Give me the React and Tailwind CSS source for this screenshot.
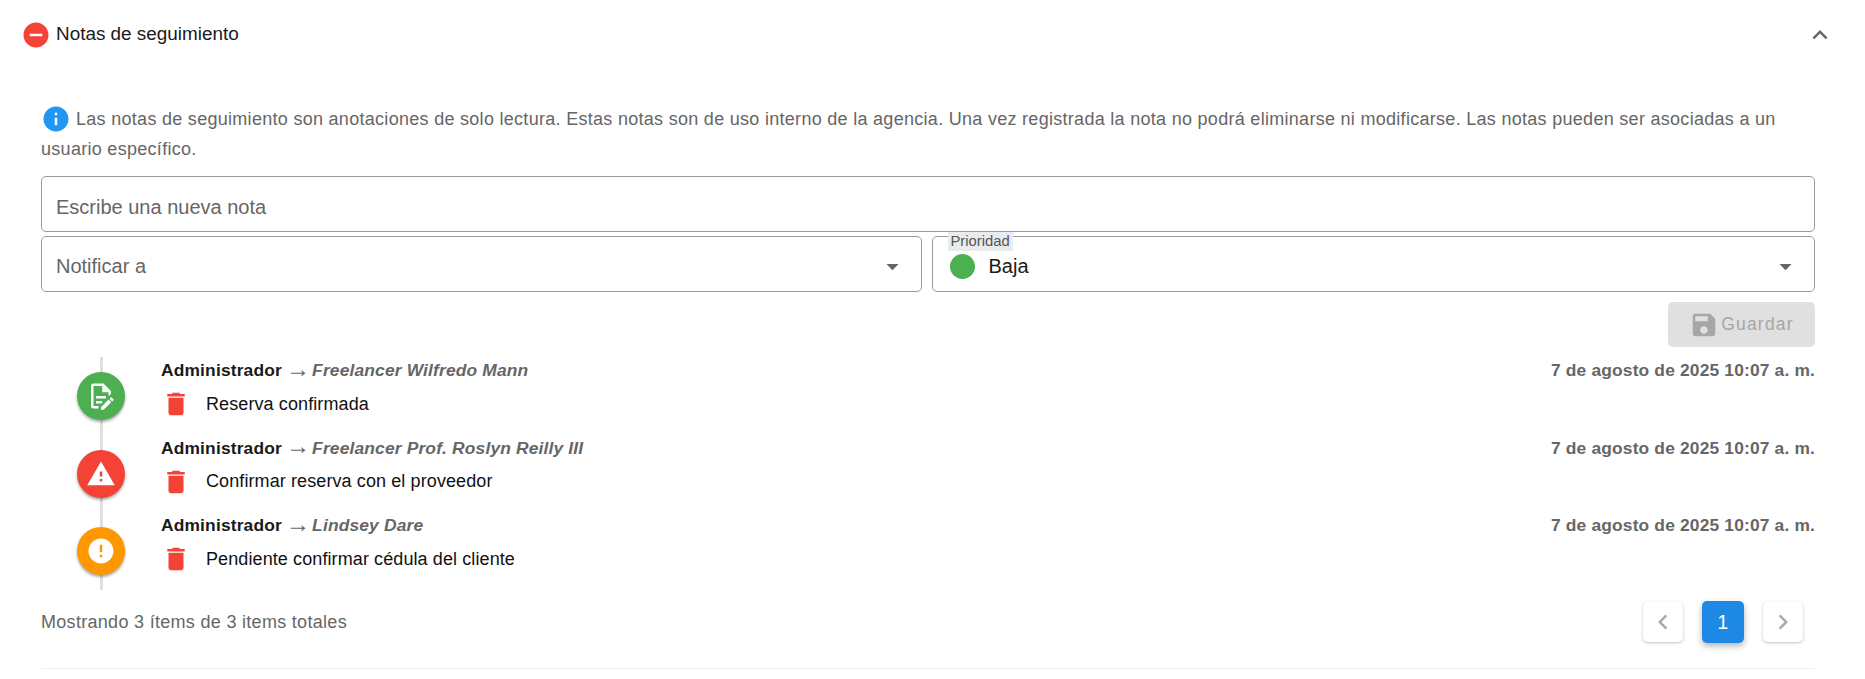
import { useState } from "react"

const notes = [
  { to: "Freelancer Wilfredo Mann", text: "Reserva confirmada", color: "bg-[#4caf50]", kind: "file" },
  { to: "Freelancer Prof. Roslyn Reilly III", text: "Confirmar reserva con el proveedor", color: "bg-[#f44336]", kind: "warn" },
  { to: "Lindsey Dare", text: "Pendiente confirmar cédula del cliente", color: "bg-[#ff9800]", kind: "error" },
]

const paths = {
  file: "M8,12H16V14H8V12M10,20H6V4H13V9H18V12.1L20,10.1V8L14,2H6A2,2 0 0,0 4,4V20A2,2 0 0,0 6,22H10V20M8,18H12.1L13,17.1V16H8V18M20.2,13C20.3,13 20.5,13.1 20.6,13.2L21.9,14.5C22.1,14.7 22.1,15.1 21.9,15.3L20.9,16.3L18.8,14.2L19.8,13.2C19.9,13.1 20,13 20.2,13M20.2,16.9L14.1,23H12V20.9L18.1,14.8L20.2,16.9Z",
  warn: "M1 21h22L12 2 1 21zm12-3h-2v-2h2v2zm0-4h-2v-4h2v4z",
  error: "M12 2C6.48 2 2 6.48 2 12s4.48 10 10 10 10-4.48 10-10S17.52 2 12 2zm1 15h-2v-2h2v2zm0-4h-2V7h2v6z",
}

function Icon({ d, className }) {
  return (
    <svg viewBox="0 0 24 24" fill="currentColor" className={className}>
      <path d={d} />
    </svg>
  )
}

function Caret() {
  return <Icon d="M7 10l5 5 5-5z" className="w-[29px] h-[29px] text-[#666]" />
}

function Note({ note }) {
  return (
    <div className="flex h-[77.5px] relative">
      <div className="w-[120px] shrink-0 flex justify-center pt-[15px] relative">
        <div className={`w-12 h-12 rounded-full flex items-center justify-center text-white shadow-[0_2px_3px_rgba(0,0,0,0.35)] ${note.color}`}>
          <Icon d={paths[note.kind]} className="w-[30px] h-[30px]" />
        </div>
      </div>
      <div className="flex-1 min-w-0">
        <div className="flex justify-between h-[27px] items-center text-[17.4px] tracking-[0.16px]">
          <div className="flex items-center">
            <span className="font-bold text-[#1a1a1a]">Administrador</span>
            <span className="text-[#666] text-[24px] leading-none ml-[4px] mr-[2px] mb-[4px]">→</span>
            <span className="font-bold italic text-[#666]">{note.to}</span>
          </div>
          <span className="font-bold text-[#666]">7 de agosto de 2025 10:07 a. m.</span>
        </div>
        <div className="flex items-center h-[40px] text-[18px] tracking-[0.1px] text-[#111]">
          <Icon d="M6 19c0 1.1.9 2 2 2h8c1.1 0 2-.9 2-2V7H6v12zM19 4h-3.5l-1-1h-5l-1 1H5v2h14V4z" className="w-[30px] h-[30px] text-[#f44336] shrink-0" />
          <span className="ml-[15px]">{note.text}</span>
        </div>
      </div>
    </div>
  )
}

export default function App() {
  const [nota, setNota] = useState("")

  return (
    <div className="w-full h-[679px] bg-white overflow-hidden font-['Liberation_Sans',Arial,sans-serif]">
      <div className="h-[69px] flex items-center justify-between pl-[21px] pr-[30px]">
        <div className="flex items-center gap-[5px] text-[18.9px] text-[#1a1a1a]">
          <Icon d="M12 2C6.48 2 2 6.48 2 12s4.48 10 10 10 10-4.48 10-10S17.52 2 12 2zm5 11H7v-2h10v2z" className="w-[30px] h-[30px] text-[#f44336]" />
          <span>Notas de seguimiento</span>
        </div>
        <Icon d="M7.41 15.41 12 10.83l4.59 4.58L18 14l-6-6-6 6z" className="w-[30px] h-[30px] text-[#666]" />
      </div>

      <div className="pl-[41px] pr-[50px]">
        <p className="mt-[35px] text-[18px] leading-[30px] tracking-[0.29px] text-[#666]">
          <Icon d="M12 2C6.48 2 2 6.48 2 12s4.48 10 10 10 10-4.48 10-10S17.52 2 12 2zm1 15h-2v-6h2v6zm0-8h-2V7h2v2z" className="inline-block w-[30px] h-[30px] mr-[5px] align-[-9px] text-[#2196f3]" />
          Las notas de seguimiento son anotaciones de solo lectura. Estas notas son de uso interno de la agencia. Una vez registrada la nota no podrá eliminarse ni modificarse. Las notas pueden ser asociadas a un usuario específico.
        </p>

        <input
          value={nota}
          onChange={e => setNota(e.target.value)}
          placeholder="Escribe una nueva nota"
          className="mt-[12px] block w-full h-[56px] px-[14px] pt-[6px] border border-[#9a9a9a] rounded-[5px] text-[20px] outline-none placeholder:text-[#666]"
        />

        <div className="mt-[4px] flex gap-[10px]">
          <div className="flex-1 h-[56px] pl-[14px] pr-[14px] pt-[4px] border border-[#9a9a9a] rounded-[5px] flex items-center justify-between text-[20px] text-[#666]">
            <span>Notificar a</span>
            <Caret />
          </div>
          <div className="flex-1 h-[56px] pl-[17px] pr-[14px] pt-[4px] border border-[#9a9a9a] rounded-[5px] flex items-center justify-between text-[20px] text-[#1a1a1a] relative">
            <span className="absolute left-[15px] top-[-5px] h-[19px] px-[3px] bg-[#e9ecec] text-[14.8px] leading-[18px] tracking-normal text-[#555]">Prioridad</span>
            <div className="flex items-center gap-[14px]">
              <span className="w-[25px] h-[25px] rounded-full bg-[#4caf50]" />
              <span>Baja</span>
            </div>
            <Caret />
          </div>
        </div>

        <div className="mt-[10px] flex justify-end">
          <button disabled className="w-[147px] h-[45px] rounded-[5px] bg-[#e0e0e0] text-[#a6a6a6] text-[17.5px] tracking-[1.2px] flex items-center justify-center gap-[2px]">
            <Icon d="M17 3H5c-1.11 0-2 .9-2 2v14c0 1.1.89 2 2 2h14c1.1 0 2-.9 2-2V7l-4-4zm-5 16c-1.66 0-3-1.34-3-3s1.34-3 3-3 3 1.34 3 3-1.34 3-3 3zm3-10H5V5h10v4z" className="w-[30px] h-[30px]" />
            Guardar
          </button>
        </div>

        <div className="mt-[10px] relative">
          <div className="absolute left-[59px] top-0 bottom-0 w-[3px] bg-[#e0e0e0]" />
          {notes.map(n => <Note key={n.text} note={n} />)}
        </div>

        <div className="mt-[11px] h-[42px] flex items-center justify-between text-[18px] tracking-[0.3px] text-[#666]">
          <span className="pt-[2px]">Mostrando 3 ítems de 3 items totales</span>
          <div className="flex items-center gap-[19px] mr-[12px]">
            <button className="w-10 h-10 rounded-[5px] bg-white flex items-center justify-center text-[#aaa] shadow-[0_1px_3px_rgba(0,0,0,0.25)]">
              <Icon d="M15.41 7.41 14 6l-6 6 6 6 1.41-1.41L10.83 12z" className="w-[30px] h-[30px]" />
            </button>
            <button className="w-[42px] h-[42px] rounded-[5px] bg-[#1e88e5] text-white text-[20px] shadow-[0_3px_6px_rgba(0,0,0,0.3)]">1</button>
            <button className="w-10 h-10 rounded-[5px] bg-white flex items-center justify-center text-[#aaa] shadow-[0_1px_3px_rgba(0,0,0,0.25)]">
              <Icon d="M10 6 8.59 7.41 13.17 12l-4.58 4.59L10 18l6-6z" className="w-[30px] h-[30px]" />
            </button>
          </div>
        </div>

        <div className="mt-[25px] border-b border-[#f0f0f0]" />
      </div>
    </div>
  )
}
